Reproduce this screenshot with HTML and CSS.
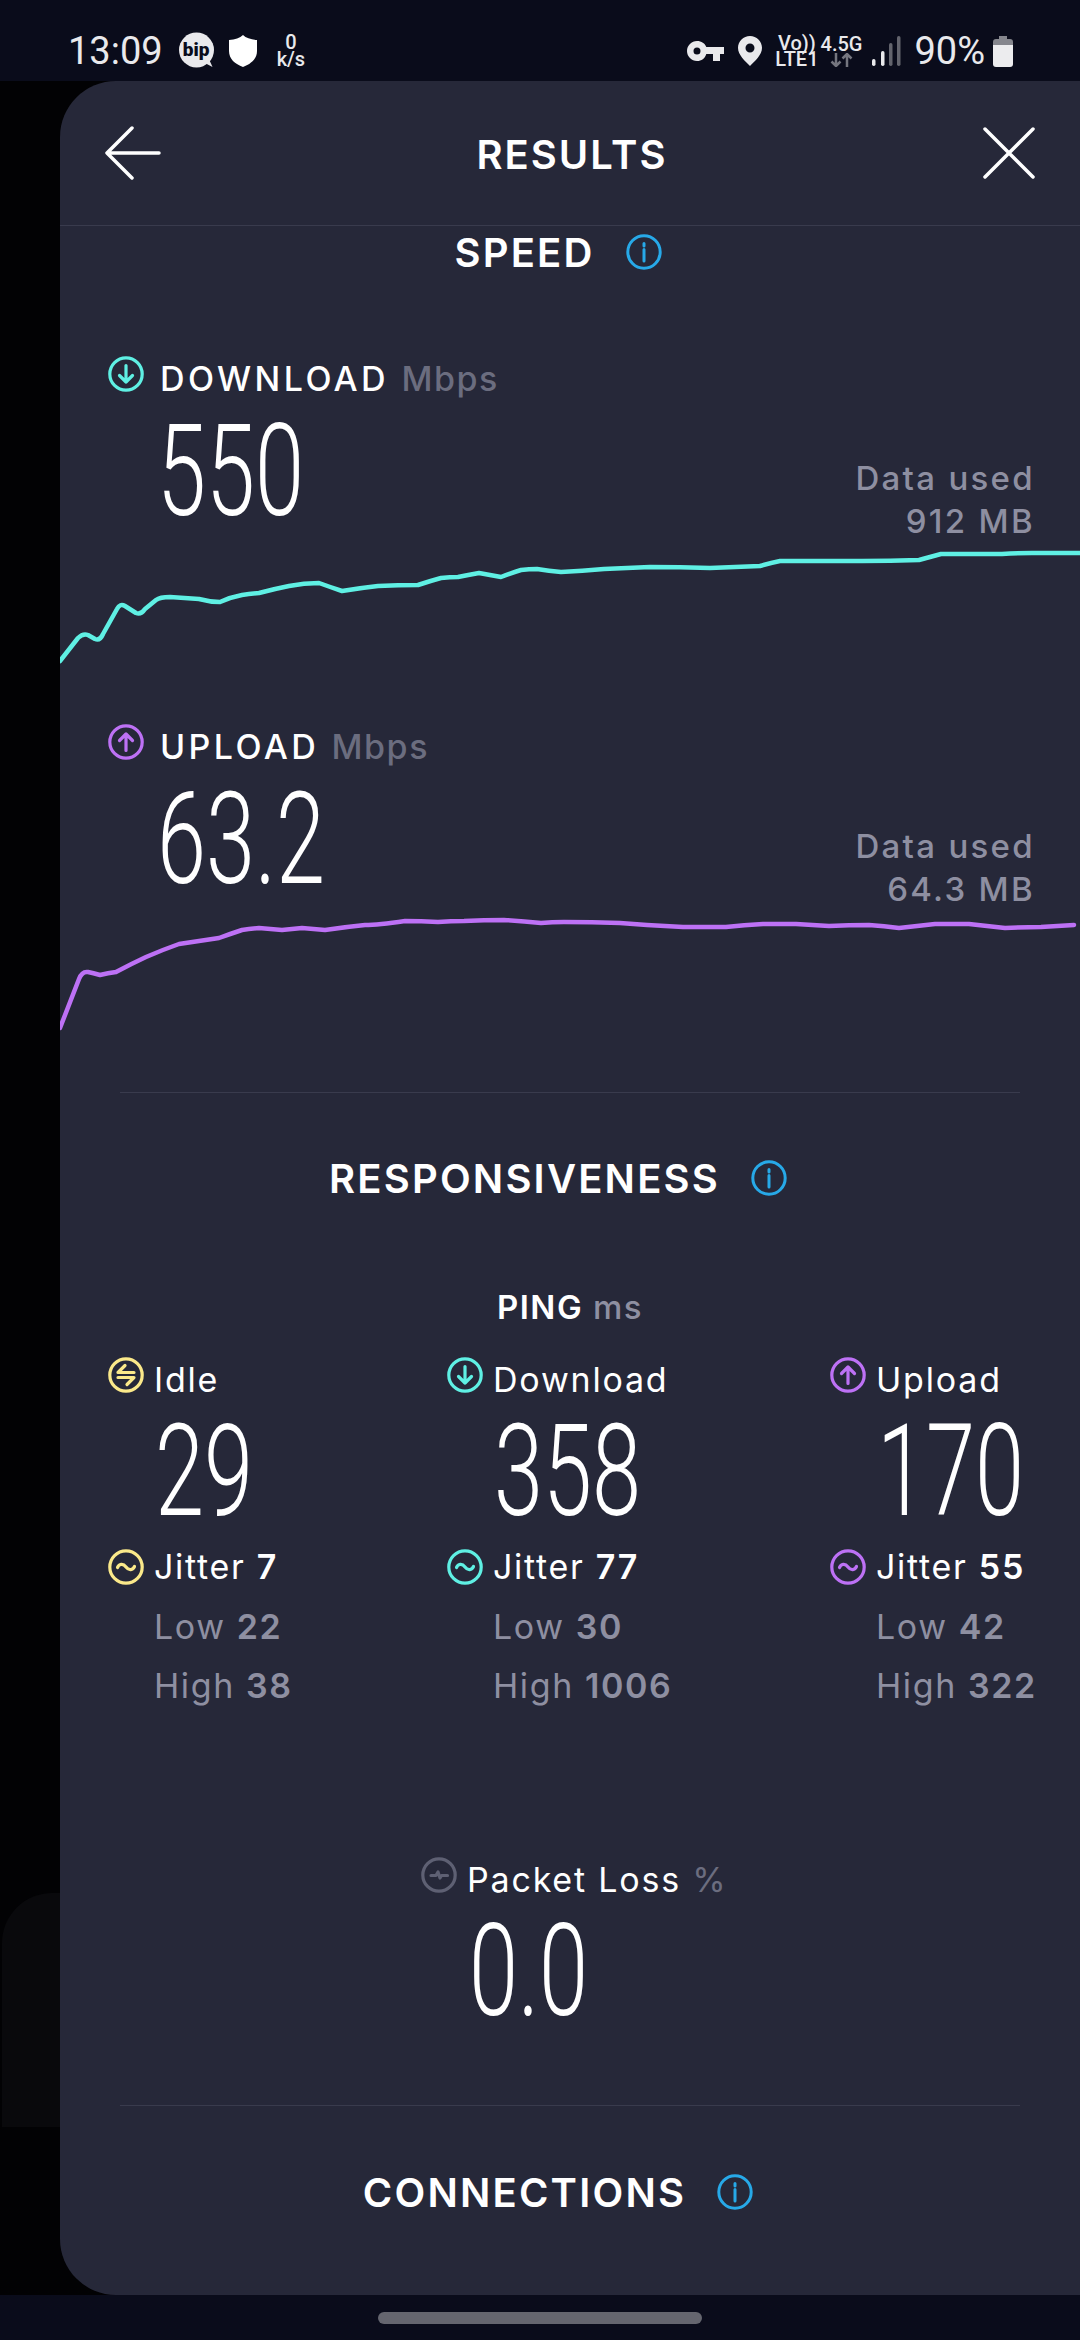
FILE: index.html
```html
<!DOCTYPE html>
<html lang="en">
<head>
  <meta charset="UTF-8">
  <meta name="viewport" content="width=device-width, initial-scale=1.0">
  <title>Results</title>
  <link rel="stylesheet" href="styles.css">
</head>
<body>
  <svg class="defs" width="0" height="0">
    <symbol id="ic-down" viewBox="0 0 36 36"><circle cx="18" cy="18" r="16.2"/><path d="M18 9.500V26M11.500 19.500 18 26l6.500-6.500"/></symbol>
    <symbol id="ic-up" viewBox="0 0 36 36"><circle cx="18" cy="18" r="16.2"/><path d="M18 26.500V10M11.500 16.500 18 10l6.500 6.500"/></symbol>
    <symbol id="ic-jitter" viewBox="0 0 36 36"><circle cx="18" cy="18" r="16.2"/><path d="M9.500 18.500c1.500-3.500 5.500-4.500 8.500-.500s7 3 8.500-.500"/></symbol>
    <symbol id="ic-idle" viewBox="0 0 36 36"><circle cx="18" cy="18" r="16.2"/><path d="M26 15.500H10L17 8.500M10 20.500H26L19 27.500"/></symbol>
    <symbol id="ic-loss" viewBox="0 0 36 36"><circle cx="18" cy="18" r="16.200"/><path d="M10 18.500h5l2-3.500 2 6 1.500-2.500h6"/></symbol>
    <symbol id="ic-info" viewBox="0 0 36 36"><circle cx="18" cy="18" r="16.200"/><path d="M18 15.500V27M18 9.500v2.500"/></symbol>
  </svg>

  <header class="status-bar">
    <div class="status-left">
      <span class="clock">13:09</span>
      <span class="bip">
        <svg width="36" height="38" viewBox="0 0 36 38"><circle cx="17.500" cy="18" r="17.500"/><path d="M24 30l9.500 5-4-9z"/></svg>
        <span class="bip-text">bip</span>
      </span>
      <svg class="shield" width="28" height="32" viewBox="0 0 28 32"><path d="M14 0c3 3 8 4.500 14 5v11c0 8-6 13-14 16C6 29 0 24 0 16V5c6-.500 11-2 14-5z"/></svg>
      <span class="netspeed"><b>0</b><b>k/s</b></span>
    </div>
    <div class="status-right">
      <svg class="key" width="37" height="20" viewBox="0 0 37 20"><path fill-rule="evenodd" d="M10 0c4.500 0 8 2.500 9.300 6H37v7h-4v7h-7v-7h-6.700C18 17.500 14.500 20 10 20 4.500 20 0 15.500 0 10S4.500 0 10 0zm0 6.500a3.500 3.500 0 1 0 0 7 3.500 3.500 0 0 0 0-7z"/></svg>
      <svg class="pin" width="24" height="30" viewBox="0 0 24 30"><path fill-rule="evenodd" d="M12 0c6.600 0 12 5.200 12 11.800C24 19 17 25 12 30 7 25 0 19 0 11.800 0 5.200 5.400 0 12 0zm0 7.500a4.500 4.500 0 1 0 0 9 4.500 4.500 0 0 0 0-9z"/></svg>
      <span class="volte"><span>Vo))</span><span>LTE1</span></span>
      <span class="net">
        <span>4.5G</span>
        <svg width="23" height="14" viewBox="0 0 23 14"><path d="M6 0v13M1.500 8.500 6 13l4.500-4.500M17 14V1M12.500 5.500 17 1l4.500 4.500"/></svg>
      </span>
      <svg class="signal" width="29" height="30" viewBox="0 0 29 30"><rect class="on" x="0" y="23" width="3.500" height="7" rx="1.700"/><rect class="on" x="9" y="15" width="3.500" height="15" rx="1.700"/><rect x="17" y="7" width="3.500" height="23" rx="1.700"/><rect x="25" y="0" width="3.500" height="30" rx="1.700"/></svg>
      <span class="clock">90%</span>
      <svg class="battery" width="20" height="31" viewBox="0 0 20 31"><path class="batt-empty" d="M6 0h8v3h3a3 3 0 0 1 3 3v4H0V6a3 3 0 0 1 3-3h3z"/><path d="M0 9h20v19a3 3 0 0 1-3 3H3a3 3 0 0 1-3-3z"/></svg>
    </div>
  </header>

  <div class="stage">
    <div class="ghost-card"></div>
    <main class="card">
      <div class="topbar">
        <svg class="back" width="56" height="56" viewBox="0 0 56 56"><path d="M54 28H3M27 3 2 28l25 25"/></svg>
        <h1 class="page-title">RESULTS</h1>
        <svg class="close" width="52" height="52" viewBox="0 0 52 52"><path d="M2 2l48 48M50 2 2 50"/></svg>
      </div>

      <h2 class="section-title">SPEED <svg class="icon info"><use href="#ic-info"/></svg></h2>

      <section class="metric metric-first">
        <div class="metric-row">
          <div>
            <div class="metric-label">
              <svg class="icon cyan"><use href="#ic-down"/></svg>
              <span>DOWNLOAD <em>Mbps</em></span>
            </div>
            <div class="big-num num-speed"><span>550</span></div>
          </div>
          <div class="data-used">Data used<br>912 MB</div>
        </div>
        <svg class="chart" width="1020" height="130" viewBox="0 0 1020 130">
          <path class="line-cyan" d="M0,118 L18,95 Q23,90 28,92 L35,96 Q40,98 43,91 L57,66 Q60,60 65,63 L76,70 Q81,72 85,66 L96,57 Q100,54 110,54 L139,56 Q150,59 160,59 Q171,54 182,52 Q190,51 199,50 Q214,46 229,43 Q244,40 259,40 Q270,44 282,48 Q300,45 318,43 Q338,42 358,42 Q370,38 381,35 Q390,34 398,34 Q408,32 419,30 Q430,32 441,34 Q451,30 461,27 Q469,26 477,26 Q489,28 501,29 Q522,28 544,26 Q567,25 590,24 Q620,24 650,25 Q675,24 700,23 Q710,20 720,18 Q761,18 802,18 Q830,18 859,17 Q870,14 881,11 Q911,11 942,11 Q957,10 972,10 L1020,10"/>
        </svg>
      </section>

      <section class="metric">
        <div class="metric-row">
          <div>
            <div class="metric-label">
              <svg class="icon purple"><use href="#ic-up"/></svg>
              <span>UPLOAD <em>Mbps</em></span>
            </div>
            <div class="big-num num-speed"><span>63.2</span></div>
          </div>
          <div class="data-used">Data used<br>64.3 MB</div>
        </div>
        <svg class="chart" width="1020" height="130" viewBox="0 0 1020 130">
          <path class="line-purple" d="M0,117 L19,68 Q22,60 28,61 Q33,62 40,64 Q48,62 56,61 Q71,53 86,46 Q102,39 119,33 Q139,30 159,27 Q170,23 182,19 Q190,18 199,17 Q210,18 222,19 Q232,18 242,17 Q253,18 265,19 Q285,16 305,14 Q318,14 345,10 Q361,10 378,11 Q391,10 404,10 Q424,9 444,9 Q462,10 481,12 Q492,11 504,11 Q532,11 560,12 Q573,13 587,14 Q605,15 623,16 Q644,16 666,16 Q684,14 703,13 Q719,13 736,13 Q752,14 769,15 Q789,14 809,14 Q824,15 839,17 Q857,15 875,13 Q892,13 909,13 Q927,15 945,17 Q963,16 981,16 L1014,14"/>
        </svg>
      </section>

      <div class="rule"></div>

      <h2 class="section-title title-resp">RESPONSIVENESS <svg class="icon info"><use href="#ic-info"/></svg></h2>

      <div class="ping-head">PING <em>ms</em></div>

      <div class="ping-grid">
        <div class="ping-col">
          <div class="ping-label"><svg class="icon yellow"><use href="#ic-idle"/></svg><span>Idle</span></div>
          <div class="big-num num-ping"><span>29</span></div>
          <div class="jitter"><svg class="icon yellow"><use href="#ic-jitter"/></svg><span>Jitter <b>7</b></span></div>
          <div class="stat stat-first">Low <b>22</b></div>
          <div class="stat">High <b>38</b></div>
        </div>
        <div class="ping-col">
          <div class="ping-label"><svg class="icon cyan"><use href="#ic-down"/></svg><span>Download</span></div>
          <div class="big-num num-ping"><span>358</span></div>
          <div class="jitter"><svg class="icon cyan"><use href="#ic-jitter"/></svg><span>Jitter <b>77</b></span></div>
          <div class="stat stat-first">Low <b>30</b></div>
          <div class="stat">High <b>1006</b></div>
        </div>
        <div class="ping-col">
          <div class="ping-label"><svg class="icon purple"><use href="#ic-up"/></svg><span>Upload</span></div>
          <div class="big-num num-ping"><span>170</span></div>
          <div class="jitter"><svg class="icon purple"><use href="#ic-jitter"/></svg><span>Jitter <b>55</b></span></div>
          <div class="stat stat-first">Low <b>42</b></div>
          <div class="stat">High <b>322</b></div>
        </div>
      </div>

      <div class="packet">
        <div class="ping-label"><svg class="icon grey"><use href="#ic-loss"/></svg><span>Packet Loss <em>%</em></span></div>
        <div class="big-num num-loss"><span>0.0</span></div>
      </div>

      <div class="rule rule-low"></div>

      <h2 class="section-title title-conn">CONNECTIONS <svg class="icon info"><use href="#ic-info"/></svg></h2>
    </main>
  </div>

  <footer class="nav-bar"><div class="home-pill"></div></footer>
</body>
</html>
```

FILE: styles.css
```css
* {
  box-sizing: border-box;
}
html, body {
  margin: 0;
  padding: 0;
  height: 2340px;
  overflow: hidden;
}
body {
  display: flex;
  flex-direction: column;
  width: 1080px;
  background-color: #020204;
  color: #fff;
  font-family: "Inter", "Liberation Sans", sans-serif;
}
.defs {
  position: absolute;
}
em {
  font-style: normal;
}

/* status bar */
.status-bar {
  height: 81px;
  flex-shrink: 0;
  background-color: #0a0c1b;
  color: #e9e9ec;
  padding: 21px 67px 0 68px;
  display: flex;
  justify-content: space-between;
  align-items: center;
  font-family: "Roboto", sans-serif;
}
.status-left, .status-right {
  display: flex;
  align-items: center;
}
.clock {
  font-size: 38px;
  line-height: 44px;
}
.bip {
  position: relative;
  width: 36px;
  height: 38px;
  margin-left: 16px;
}
.bip svg {
  display: block;
  fill: #e9e9ec;
}
.bip-text {
  position: absolute;
  left: 0;
  width: 35px;
  top: 6px;
  text-align: center;
  font-size: 19px;
  line-height: 24px;
  font-weight: 900;
  color: #0a0c1b;
}
.shield {
  margin-left: 14px;
  fill: #fff;
}
.netspeed {
  margin-left: 20px;
  display: flex;
  flex-direction: column;
  align-items: center;
  font-size: 20px;
  line-height: 17px;
}
.netspeed b {
  font-weight: 500;
}
.key, .pin {
  fill: #e9e9ec;
}
.pin {
  margin-left: 14px;
}
.volte {
  margin-left: 13px;
  display: flex;
  flex-direction: column;
  align-items: center;
  font-size: 20px;
  line-height: 16px;
  font-weight: 500;
}
.net {
  margin-left: 2px;
  display: flex;
  flex-direction: column;
  align-items: center;
  font-size: 20px;
  line-height: 17px;
  font-weight: 500;
}
.net svg {
  fill: none;
  stroke: #75767f;
  stroke-width: 2.5;
}
.signal {
  margin-left: 10px;
  fill: #63646d;
}
.signal .on {
  fill: #e9e9ec;
}
.status-right .clock {
  margin-left: 13px;
}
.battery {
  margin-left: 8px;
  fill: #ececee;
}
.batt-empty {
  fill: #85868d;
}

/* main sheet */
.stage {
  flex: 1;
  position: relative;
  padding-left: 60px;
  display: flex;
  min-height: 0;
}
.ghost-card {
  position: absolute;
  left: 2px;
  top: 1812px;
  width: 70px;
  height: 234px;
  background-color: #09090c;
  border-radius: 50px 0 0 0;
}
.card {
  position: relative;
  flex: 1;
  background-color: #262839;
  border-radius: 56px 0 0 56px;
  overflow: hidden;
}
.topbar {
  height: 145px;
  border-bottom: 1px solid #393b4d;
  padding: 0 45px;
  display: flex;
  justify-content: space-between;
  align-items: center;
}
.back, .close {
  fill: none;
  stroke: #fff;
  stroke-width: 3.5;
  stroke-linecap: round;
  stroke-linejoin: round;
}
.page-title {
  margin: 4px 0 0;
  font-size: 40px;
  font-weight: 600;
  letter-spacing: 2px;
  line-height: 46px;
}

.section-title {
  margin: 0;
  height: 54px;
  padding: 0 24px 2px 0;
  display: flex;
  justify-content: center;
  align-items: center;
  gap: 31px;
  font-size: 40px;
  font-weight: 600;
  letter-spacing: 2.2px;
}
.title-resp {
  margin-top: 59px;
}
.title-conn {
  margin-top: 60px;
}

.icon {
  width: 36px;
  height: 36px;
  flex-shrink: 0;
  fill: none;
  stroke-width: 3.2;
  stroke-linecap: round;
  stroke-linejoin: round;
}
.info { stroke: #27a9e8; stroke-width: 3; }
.cyan { stroke: #5ff0e4; }
.purple { stroke: #bd71f5; }
.yellow { stroke: #fbe98a; }
.grey { stroke: #5e6073; }

/* speed rows */
.metric {
  margin-top: 51px;
}
.metric-first {
  margin-top: 76px;
}
.metric-row {
  height: 187px;
  padding: 0 45px 0 48px;
  display: flex;
  justify-content: space-between;
}
.metric-label {
  display: flex;
  gap: 16px;
  font-size: 34px;
  font-weight: 500;
  line-height: 46px;
  height: 46px;
  letter-spacing: 3.4px;
}
.metric-label em {
  color: #6b6d7f;
  letter-spacing: 1.5px;
}
.data-used {
  align-self: flex-end;
  text-align: right;
  font-size: 33px;
  font-weight: 500;
  line-height: 43px;
  letter-spacing: 2.3px;
  color: #8e8fa1;
}
.big-num {
  height: 100px;
  line-height: 104px;
  font-family: "Roboto", sans-serif;
  font-size: 128px;
  font-weight: 300;
  white-space: nowrap;
}
.big-num span {
  display: inline-block;
  transform: scaleX(0.69);
  transform-origin: left center;
}
.num-speed {
  margin-top: 17px;
  padding-left: 49px;
}
.chart {
  display: block;
  fill: none;
  stroke-width: 4.5;
  stroke-linejoin: round;
  stroke-linecap: round;
}
.line-cyan { stroke: #5ff0e4; }
.line-purple { stroke: #bd71f5; }

.rule {
  height: 1px;
  margin: 51px 60px 0;
  background-color: #393b4d;
}
.rule-low {
  margin-top: 86px;
}

/* ping */
.ping-head {
  margin-top: 78px;
  text-align: center;
  font-size: 33px;
  font-weight: 600;
  line-height: 46px;
  letter-spacing: 1.5px;
}
.ping-head em {
  color: #8e8fa1;
  font-weight: 500;
}
.ping-grid {
  margin-top: 27px;
  padding-left: 48px;
  display: grid;
  grid-template-columns: 339px 383px 1fr;
}
.ping-label {
  display: flex;
  gap: 10px;
  height: 46px;
  font-size: 34px;
  line-height: 46px;
  letter-spacing: 1.8px;
  color: #fff;
}
.ping-label em {
  color: #6b6d7f;
}
.num-ping {
  margin-top: 16px;
  padding-left: 47px;
}
.jitter {
  margin-top: 30px;
  display: flex;
  gap: 10px;
  height: 36px;
  font-size: 34px;
  line-height: 36px;
  letter-spacing: 1.7px;
}
.jitter b, .stat b {
  font-weight: 600;
}
.stat {
  padding-left: 46px;
  font-size: 34px;
  line-height: 59px;
  letter-spacing: 1.6px;
  color: #8e8fa1;
}
.stat-first {
  margin-top: 12px;
}

.packet {
  margin-top: 142px;
  padding-left: 361px;
}
.num-loss {
  margin-top: 16px;
  padding-left: 48px;
}

/* nav bar */
.nav-bar {
  height: 45px;
  flex-shrink: 0;
  background-color: #0a0c1b;
  padding-top: 17px;
}
.home-pill {
  width: 324px;
  height: 12px;
  margin: 0 auto;
  border-radius: 6px;
  background-color: #65666f;
}
```
